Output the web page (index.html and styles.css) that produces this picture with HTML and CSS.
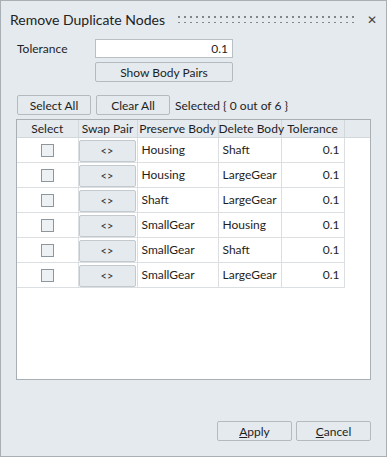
FILE: index.html
```html
<!DOCTYPE html>
<html lang="en">
<head>
  <meta charset="UTF-8" />
  <title>Remove Duplicate Nodes</title>
  <link rel="stylesheet" href="styles.css">
</head>
<body>
  <div class="window">
    <div class="titlebar">
      <span class="title">Remove Duplicate Nodes</span>
      <span class="grip"></span>
      <span class="close">&#x2715;</span>
    </div>

    <div class="form-row">
      <label class="field-label">Tolerance</label>
      <div class="field-col">
        <div class="text-input">0.1</div>
        <button class="btn wide">Show Body Pairs</button>
      </div>
    </div>

    <div class="toolbar">
      <button class="btn">Select All</button>
      <button class="btn">Clear All</button>
      <span class="status">Selected { 0 out of 6 }</span>
    </div>

    <div class="grid">
      <table>
        <colgroup>
          <col style="width:61px">
          <col style="width:59px">
          <col style="width:81px">
          <col style="width:63px">
          <col style="width:63px">
          <col>
        </colgroup>
        <thead>
          <tr>
            <th>Select</th>
            <th>Swap Pair</th>
            <th>Preserve Body</th>
            <th>Delete Body</th>
            <th>Tolerance</th>
            <th class="filler"></th>
          </tr>
        </thead>
        <tbody id="rows"></tbody>
      </table>
    </div>

    <div class="footer">
      <button class="btn action"><u>A</u>pply</button>
      <button class="btn action"><u>C</u>ancel</button>
    </div>
  </div>

  <script>
    const pairs = [
      ['Housing', 'Shaft'],
      ['Housing', 'LargeGear'],
      ['Shaft', 'LargeGear'],
      ['SmallGear', 'Housing'],
      ['SmallGear', 'Shaft'],
      ['SmallGear', 'LargeGear'],
    ];

    const tbody = document.getElementById('rows');
    pairs.forEach(pair => {
      const tr = document.createElement('tr');
      tr.innerHTML = `
        <td class="center"><span class="check"></span></td>
        <td class="swap-cell"><div class="swap">&lt;&gt;</div></td>
        <td>${pair[0]}</td>
        <td>${pair[1]}</td>
        <td class="num">0.1</td>
        <td class="empty"></td>
      `;
      tbody.appendChild(tr);
    });
  </script>
</body>
</html>
```

FILE: styles.css
```css
body {
  margin: 0;
  font-family: Lato, "Noto Sans", sans-serif;
  font-size: 12px;
  color: #1e1e1e;
}
.window {
  width: 387px;
  height: 457px;
  box-sizing: border-box;
  border: 1px solid #a9b0b5;
  background: #e4eaee;
  display: flex;
  flex-direction: column;
  padding: 0 15px 0 15px;
}
.titlebar {
  display: flex;
  align-items: center;
  height: 36px;
  margin: 0 -6px 0 -6px;
}
.title {
  font-size: 14px;
  color: #222;
}
.grip {
  flex: 1;
  height: 8px;
  margin: 0 12px 0 13px;
  background-image: linear-gradient(#7d868c 2px, transparent 2px);
  background-size: 6px 6px;
  background-position: 0 1px;
  -webkit-mask-image: linear-gradient(90deg, #000 2px, transparent 2px);
  -webkit-mask-size: 6px 100%;
}
.close {
  font-size: 12px;
  color: #444;
  width: 10px;
}
.form-row {
  display: flex;
  margin-top: 2px;
}
.field-label {
  width: 78px;
  padding-left: 1px;
  padding-top: 2px;
}
.field-col {
  width: 138px;
  display: flex;
  flex-direction: column;
  gap: 4px;
}
.text-input {
  height: 17px;
  background: #fff;
  border: 1px solid #b9c0c5;
  text-align: right;
  padding-right: 4px;
  line-height: 17px;
}
.btn {
  font-family: inherit;
  font-size: 12px;
  color: #1e1e1e;
  background: #e4eaee;
  border: 1px solid #b4bbc0;
  border-radius: 2px;
  height: 20px;
  padding: 0;
  width: 74px;
  line-height: 17px;
}
.btn.wide {
  width: 138px;
}
.toolbar {
  display: flex;
  align-items: center;
  gap: 5px;
  margin-top: 13px;
  padding-left: 1px;
}
.grid {
  margin-top: 4px;
  height: 261px;
  box-sizing: border-box;
  border: 1px solid #a9b0b5;
  background: #fff;
  overflow: hidden;
}
table {
  border-collapse: collapse;
  table-layout: fixed;
  width: 100%;
}
th {
  font-weight: normal;
  height: 17px;
  line-height: 16px;
  padding: 0;
  background: #e4eaee;
  border-right: 1px solid #d3d8db;
  border-bottom: 1px solid #d3d8db;
  text-align: center;
  white-space: nowrap;
}
th.filler {
  border-right: none;
}
td {
  height: 25px;
  line-height: 16px;
  padding: 0 4px;
  box-sizing: border-box;
  border-right: 1px solid #dcdfe1;
  border-bottom: 1px solid #dcdfe1;
  white-space: nowrap;
}
td.empty {
  border: none;
}
td.center {
  text-align: center;
  padding: 0;
}
td.num {
  text-align: right;
}
.check {
  display: inline-block;
  width: 11px;
  height: 11px;
  border: 1px solid #8d969c;
  background: #edf1f3;
  vertical-align: middle;
}
td.swap-cell {
  padding: 0;
}
.swap {
  height: 22px;
  margin: 1px 1px 0 0;
  box-sizing: border-box;
  background: #e4eaee;
  border: 1px solid #c3c9cd;
  border-radius: 2px;
  text-align: center;
  line-height: 20px;
  font-size: 11px;
  color: #333;
}
.footer {
  display: flex;
  justify-content: flex-end;
  gap: 4px;
  margin-top: auto;
  margin-bottom: 15px;
}
.btn.action {
  width: 75px;
}
```
